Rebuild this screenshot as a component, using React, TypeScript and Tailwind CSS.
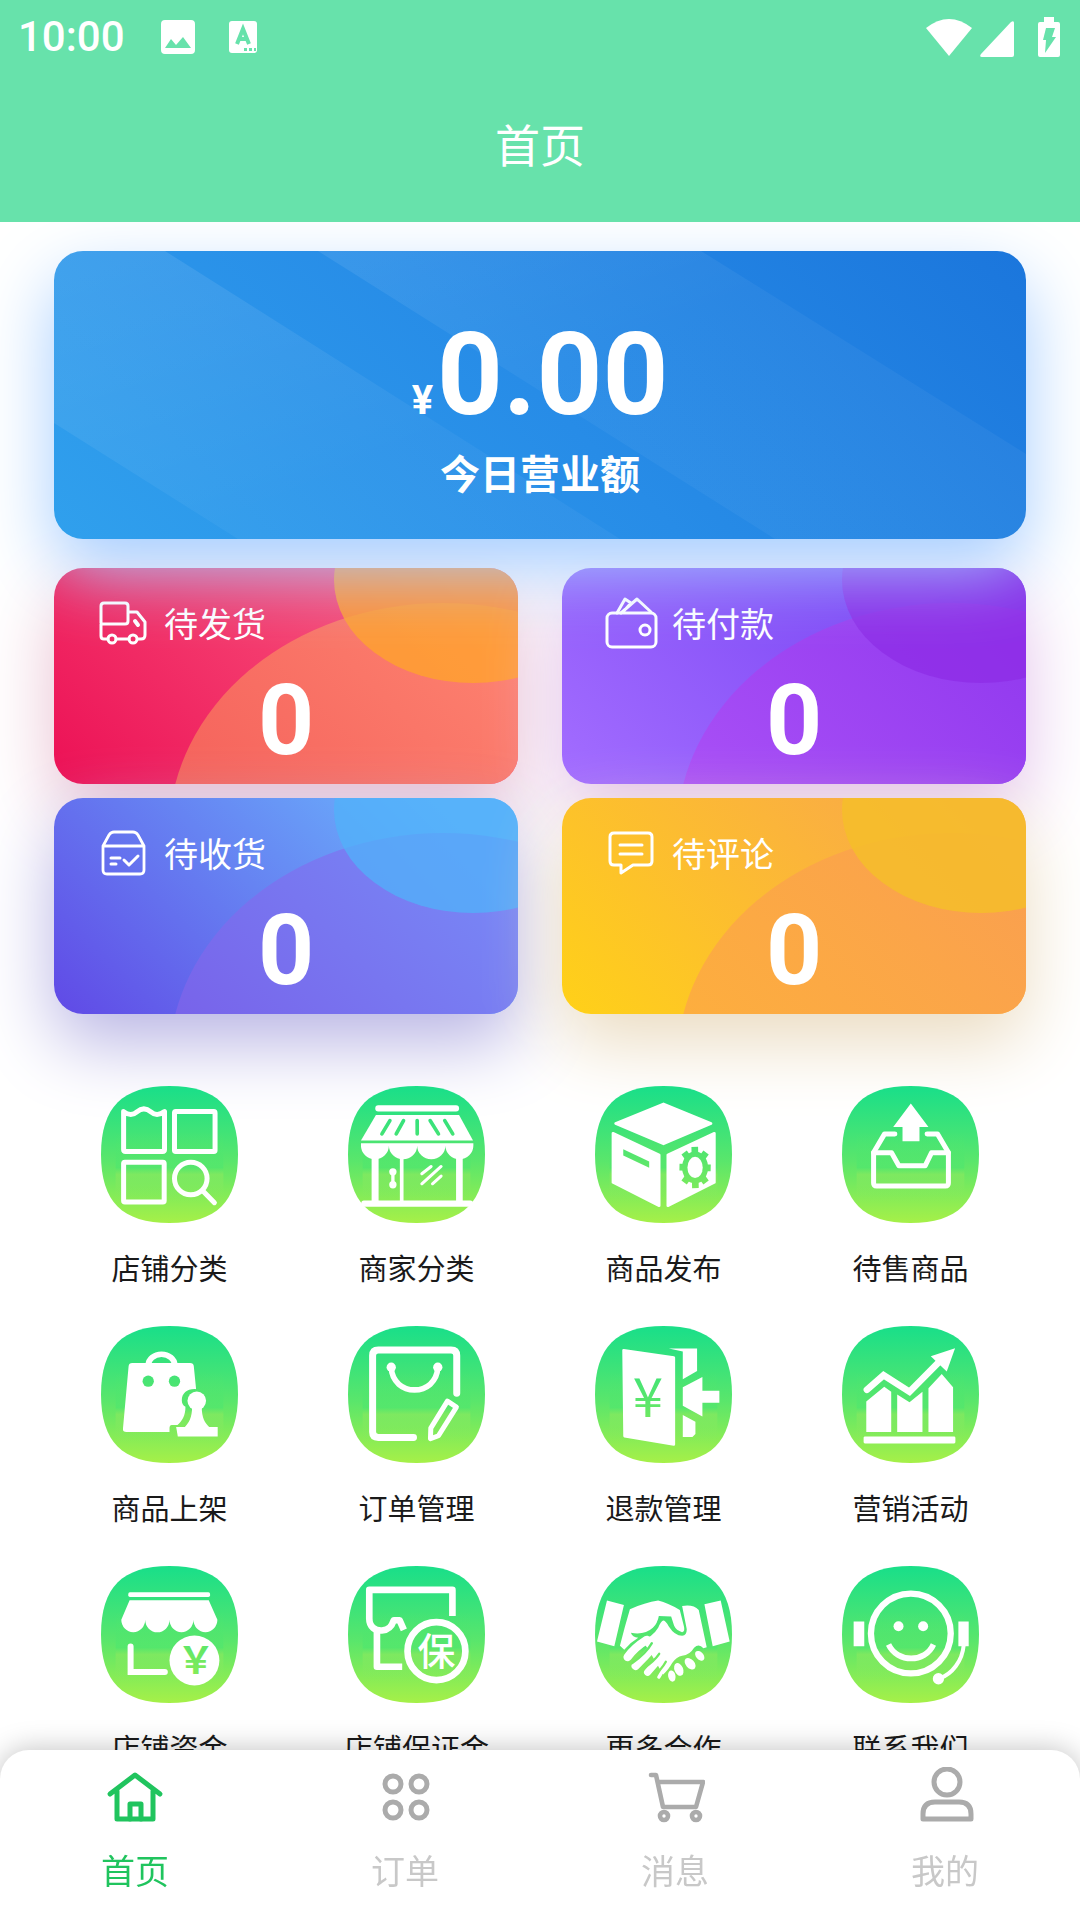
import { useState } from 'react';
import type { ReactNode } from 'react';

type OrderCard = {
  label: string;
  count: number;
  shadow: string;
  base: [string, string];
  big: [string, string];
  small: string;
  icon: ReactNode;
};

type Service = {
  label: string;
  icon: ReactNode;
};

const TILE = 'url(#tileGradient)';

const orderCards: OrderCard[] = [
  {
    label: '待发货',
    count: 0,
    shadow: 'shadow-[0_29px_72px_rgb(232,190,208)]',
    base: ['#EC1055', '#FA5A80'],
    big: ['#F5625B', '#FD8270'],
    small: 'rgba(255,163,45,0.8)',
    icon: (
      <g strokeWidth="3">
        <path d="M4 27V10q0-3 3-3H28q3 0 3 3V25q0 3-3 3H4V40q0 3 3 3h4M19 43h13M41 43h3q4 0 4-4V26L40 16H31" />
        <circle cx="15" cy="43" r="4" />
        <circle cx="36" cy="43" r="4" />
        <path d="M38 25l3 4" strokeWidth="4" />
      </g>
    ),
  },
  {
    label: '待付款',
    count: 0,
    shadow: 'shadow-[0_29px_72px_rgb(226,192,234)]',
    base: ['#A36DFF', '#7843F4'],
    big: ['#A950F6', '#923AEF'],
    small: 'rgba(142,44,230,0.75)',
    icon: (
      <g strokeWidth="3">
        <rect x="2" y="17" width="49" height="34" rx="5" />
        <circle cx="40" cy="34" r="5" />
        <path d="M12 17L20 3l6 4M16 17L32 3 46 16M18 16l8-9" />
      </g>
    ),
  },
  {
    label: '待收货',
    count: 0,
    shadow: 'shadow-[0_29px_72px_rgb(184,180,228)]',
    base: ['#6049E6', '#6BB4FC'],
    big: ['#7863EA', '#7889F6'],
    small: 'rgba(80,178,250,0.75)',
    icon: (
      <g strokeWidth="2.8">
        <path d="M6 20L12 9q2-3 5-3H36q3 0 5 3l6 11V44q0 4-4 4H10q-4 0-4-4zM6 20H47" />
        <path d="M14 32h9M14 38h5M27 34l5 5 9-9" strokeWidth="3" />
      </g>
    ),
  },
  {
    label: '待评论',
    count: 0,
    shadow: 'shadow-[0_29px_72px_rgb(235,220,193)]',
    base: ['#FFD118', '#F9A74B'],
    big: ['#FDAE3E', '#FAA04F'],
    small: 'rgba(245,191,40,0.8)',
    icon: (
      <g strokeWidth="3">
        <path d="M9 7H43q4 0 4 4V35q0 4-4 4H28L16 47V39H9q-4 0-4-4V11q0-4 4-4z" />
        <path d="M15 19H37M15 28H37" />
      </g>
    ),
  },
];

const services: Service[] = [
  {
    label: '店铺分类',
    icon: (
      <g fill="none" stroke="#fff" strokeWidth="15" strokeLinejoin="round" strokeLinecap="round">
        <path d="M68 77Q90 94 108 78Q129 60 150 78Q168 94 191 77V191q0 6-6 6H74q-6 0-6-6z" />
        <rect x="221" y="77" width="122" height="120" rx="4" />
        <rect x="68" y="229" width="122" height="120" rx="4" />
        <circle cx="270" cy="278" r="49" />
        <path d="M308 317l33 34" />
      </g>
    ),
  },
  {
    label: '商家分类',
    icon: (
      <g fill="#fff">
        <rect x="82" y="58" width="252" height="19" rx="9" />
        <path d="M84 87H334L376 164H39z" />
        <path d="M39 172H377V180a42 40 0 0 1-84 0a42 40 0 0 1-85 0a42 40 0 0 1-85 0a42 40 0 0 1-84 0z" />
        <path d="M71 210h21V350H71zM156 210h11V350h-11zM325 210h20V350h-20z" />
        <rect x="40" y="344" width="336" height="19" rx="8" />
        <circle cx="135" cy="258" r="11" />
        <circle cx="135" cy="297" r="11" />
        <path d="M130 255h10v45h-10z" />
        <g fill="none" stroke="#fff" strokeWidth="9" strokeLinecap="round">
          <path d="M222 264l28-22M222 294l58-52M254 294l26-23" />
        </g>
        <g fill="none" stroke={TILE} strokeWidth="11" strokeLinecap="round">
          <path d="M126 104l-24 40M167 104l-22 40M208 104l.2 40M247 104l25 40M291 104l24 40" />
        </g>
      </g>
    ),
  },
  {
    label: '商品发布',
    icon: (
      <g fill="#fff" stroke="#fff" strokeWidth="8" strokeLinejoin="round">
        <path d="M206 54L349 113 206 174 62 113z" />
        <path d="M54 142L193 207V360L54 290z" />
        <path d="M359 142L219 207V360L359 290z" />
        <path d="M85 190l78 37v19l-78-37z" fill={TILE} stroke="none" />
        <g fill="none" stroke={TILE} strokeLinejoin="miter">
          <ellipse cx="301" cy="245" rx="31" ry="40" strokeWidth="16" />
          <path d="M300 183l2 124M254 244l94 2M268 200l66 90M334 200l-66 90" strokeWidth="20" />
        </g>
        <ellipse cx="301" cy="245" rx="23" ry="32" stroke="none" />
      </g>
    ),
  },
  {
    label: '待售商品',
    icon: (
      <>
        <path d="M207 53l53 70h-27v43h-51v-43h-28z" fill="#fff" />
        <g fill="none" stroke="#fff" strokeWidth="15" strokeLinejoin="round" strokeLinecap="round">
          <path d="M159 144H128L95 200V292q0 9 9 9H311q9 0 9-9V200L287 144H256" />
          <path d="M95 201h54l22 39h79l19-39h51" />
        </g>
      </>
    ),
  },
  {
    label: '商品上架',
    icon: (
      <g fill="#fff">
        <path d="M94 111H268q10 0 11 9l7 70C260 188 243 202 243 223C243 233 247 238 254 243C254 270 244 286 230 298H212q-6 0-6 8V319H77q-12 0-11-10L83 121q1-10 11-10z" />
        <path d="M142 118a40 33 0 0 1 80 0" fill="none" stroke="#fff" strokeWidth="17" />
        <circle cx="142" cy="166" r="17" fill={TILE} />
        <circle cx="221" cy="166" r="17" fill={TILE} />
        <circle cx="288" cy="225" r="28" />
        <path d="M274 242C274 276 264 292 250 306H328C312 292 303 276 303 242z" />
        <path d="M226 304H351V332H231z" />
      </g>
    ),
  },
  {
    label: '订单管理',
    icon: (
      <g fill="none" stroke="#fff" strokeLinejoin="round" strokeLinecap="round">
        <path d="M327 202V89q0-17-17-17H91q-17 0-17 17V319q0 16 17 16H197" strokeWidth="21" />
        <path d="M130 124C134 215 266 215 270 124" strokeWidth="17" />
        <path d="M299 226l27 18-54 86-24 9 1-32z" strokeWidth="15" />
        <circle cx="130" cy="124" r="14" fill="#fff" stroke="none" />
        <circle cx="270" cy="124" r="14" fill="#fff" stroke="none" />
      </g>
    ),
  },
  {
    label: '退款管理',
    icon: (
      <g fill="#fff">
        <path d="M86 73L237 95V356L89 331z" stroke="#fff" strokeWidth="8" strokeLinejoin="round" />
        <path d="M222 68h85v67l-43 25V77zM264 184l59-31v42h51v36h-51v41l-59-32zM264 268l38 20v37l-9 9h-29z" />
        <text x="159" y="275" textAnchor="middle" fontSize="164" fill={TILE} className="font-['Noto_Sans_CJK_SC',sans-serif] font-normal">
          ¥
        </text>
      </g>
    ),
  },
  {
    label: '营销活动',
    icon: (
      <g fill="#fff">
        <rect x="65" y="332" width="276" height="21" rx="4" />
        <path d="M73 227l54-44 21 15V319H73zM166 206l37 23 39-31V319h-76zM260 187l40-43 34 40V319h-74z" />
        <path d="M75 192l50-44 78 50 92-93" fill="none" stroke="#fff" strokeWidth="20" strokeLinecap="round" />
        <path d="M340 67l-25 70-48-46z" />
      </g>
    ),
  },
  {
    label: '店铺资金',
    icon: (
      <g fill="#fff">
        <rect x="82" y="79" width="246" height="14" rx="5" />
        <path d="M86 103H324L350 162a36 37 0 0 1-72 0a36 37 0 0 1-72 0a36 37 0 0 1-73 0a36 37 0 0 1-72 0z" />
        <path d="M89 242v77H192" fill="none" stroke="#fff" strokeWidth="18" strokeLinecap="round" />
        <circle cx="281" cy="284" r="75" />
        <text x="285" y="324" textAnchor="middle" fontSize="112" fill={TILE} className="font-['Noto_Sans_CJK_SC',sans-serif] font-bold">
          ￥
        </text>
      </g>
    ),
  },
  {
    label: '店铺保证金',
    icon: (
      <g fill="none" stroke="#fff" strokeWidth="20" strokeLinejoin="round">
        <path d="M314 150V72H64V158C64 184 82 195 102 194C124 193 132 180 138 163H155L168 192" />
        <path d="M87 190V303H163" />
        <circle cx="266" cy="256" r="87" />
        <text x="266" y="297" textAnchor="middle" fontSize="114" fill="#fff" stroke="none" className="font-['Noto_Sans_CJK_SC',sans-serif] font-medium">
          保
        </text>
      </g>
    ),
  },
  {
    label: '更多合作',
    icon: (
      <g fill="#fff">
        <path d="M36 104l51 13-29 124-52-14zM329 115l49-11 27 123-51 14z" />
        <path d="M105 130Q150 110 190 104Q220 112 255 132L267 180Q272 198 262 199Q244 194 238 180L229 152 192 150Q188 172 174 186Q150 208 108 201Q112 214 130 216Q106 230 88 252L75 240Q90 180 105 130z" />
        <path d="M205 164Q212 164 222 182Q240 210 262 210Q276 208 276 190L262 120Q295 114 312 132L336 244 326 247Q312 232 298 246Q285 268 262 270Q246 272 232 292Q220 314 205 326L160 250 140 222Q172 216 190 186Q198 166 205 164z" />
        <g fill="none" stroke="#fff" strokeLinecap="round">
          <path d="M156 222Q118 246 98 274" strokeWidth="25" />
          <path d="M178 242Q150 274 122 301" strokeWidth="24" />
          <path d="M200 272L158 320" strokeWidth="21" />
          <path d="M215 296L192 334" strokeWidth="10" />
        </g>
        <g fill="none" stroke={TILE} strokeWidth="7" strokeLinecap="round">
          <path d="M171 232Q154 262 112 292M193 264Q180 284 146 308M213 288Q200 312 176 330" />
        </g>
        <ellipse cx="231" cy="331" rx="11" ry="17" transform="rotate(-12 231 331)" />
        <ellipse cx="252" cy="311" rx="13" ry="20" transform="rotate(-22 252 311)" />
        <ellipse cx="286" cy="294" rx="13" ry="20" transform="rotate(-42 286 294)" />
        <ellipse cx="315" cy="270" rx="11" ry="17" transform="rotate(-42 315 270)" />
      </g>
    ),
  },
  {
    label: '联系我们',
    icon: (
      <g fill="#fff">
        <g fill="none" stroke="#fff">
          <circle cx="207" cy="203" r="120" strokeWidth="19" />
          <path d="M140 236C166 292 250 292 275 236" strokeWidth="17" />
          <path d="M366 238C362 285 332 325 292 339" strokeWidth="12" />
        </g>
        <circle cx="170" cy="181" r="15" />
        <circle cx="244" cy="181" r="15" />
        <path d="M35 167h32v74H35zM350 167h31v74h-31z" />
        <circle cx="290" cy="339" r="17" />
      </g>
    ),
  },
];

const tabs: Service[] = [
  {
    label: '首页',
    icon: (
      <>
        <path d="M5 27L30 8 55 27M12 24V52H48V24" />
        <path d="M25 52V37H36V52" />
      </>
    ),
  },
  {
    label: '订单',
    icon: (
      <>
        <circle cx="18" cy="17" r="8" />
        <circle cx="44" cy="17" r="8" />
        <circle cx="18" cy="43" r="8" />
        <circle cx="44" cy="43" r="8" />
      </>
    ),
  },
  {
    label: '消息',
    icon: (
      <g strokeWidth="4.6">
        <path d="M6 8h5l7 32H51L58 15H14" />
        <circle cx="19" cy="49" r="4" />
        <circle cx="51" cy="49" r="4" />
      </g>
    ),
  },
  {
    label: '我的',
    icon: (
      <>
        <circle cx="32" cy="15" r="13" />
        <path d="M8 52V47q0-12 12-12H44q12 0 12 12v5z" />
      </>
    ),
  },
];

function StatusBar() {
  return (
    <div className="flex h-[74px] items-center justify-between pr-5 pl-[18px]">
      <div className="flex items-center">
        <span className="text-[42px] leading-[50px] font-medium">10:00</span>
        <svg viewBox="0 0 34 34" className="ml-9 size-[34px]">
          <path fillRule="evenodd" fill="#fff" d="M4 0H30q4 0 4 4V30q0 4-4 4H4q-4 0-4-4V4q0-4 4-4zM4 28H30L22 17l-7 8-5-6z" />
        </svg>
        <svg viewBox="0 0 28 32" className="ml-[34px] h-8 w-7">
          <rect width="28" height="32" rx="3" fill="#fff" />
          <path d="M8 23L14 8l6 15M10 18h8" fill="none" stroke="#67E2AB" strokeWidth="4" />
          <path d="M15 27h3v3h-3zM20 27h3v3h-3zM25 27h2v3h-2z" fill="#67E2AB" />
        </svg>
      </div>
      <div className="flex items-end">
        <svg viewBox="0 0 46 38" className="h-[38px] w-[46px]">
          <path d="M0 9Q23-9 46 9L23 37z" fill="#fff" />
        </svg>
        <svg viewBox="0 0 34 36" className="ml-2 h-9 w-[34px]">
          <path d="M34 2V34q0 2-2 2H2q-3 0-1-3L31 1q3-2 3 1z" fill="#fff" />
        </svg>
        <svg viewBox="0 0 22 40" className="ml-6 h-10 w-[22px]">
          <path d="M6 0H16V5H20q2 0 2 2V38q0 2-2 2H2q-2 0-2-2V7q0-2 2-2H6z" fill="#fff" />
          <path d="M8 11h9l-3 9h4L7 36l1-13H5z" fill="#67E2AB" />
        </svg>
      </div>
    </div>
  );
}

function CardBackdrop({ id, card }: { id: string; card: OrderCard }) {
  return (
    <svg viewBox="0 0 464 216" preserveAspectRatio="none" className="absolute inset-0 size-full" aria-hidden="true">
      <defs>
        <linearGradient id={`${id}-base`} gradientUnits="userSpaceOnUse" x1="0" y1="216" x2="300" y2="-84">
          <stop offset="0" stopColor={card.base[0]} />
          <stop offset="1" stopColor={card.base[1]} />
        </linearGradient>
        <linearGradient id={`${id}-big`} gradientUnits="userSpaceOnUse" x1="160" y1="256" x2="400" y2="16">
          <stop offset="0" stopColor={card.big[0]} />
          <stop offset="1" stopColor={card.big[1]} />
        </linearGradient>
      </defs>
      <rect width="464" height="216" fill={`url(#${id}-base)`} />
      <ellipse cx="389" cy="265" rx="274" ry="230" fill={`url(#${id}-big)`} />
      <ellipse cx="419" cy="12" rx="139" ry="103" fill={card.small} />
    </svg>
  );
}

function ServiceIcon({ children }: { children: ReactNode }) {
  return (
    <svg viewBox="0 0 412 412" className="size-[137px]" aria-hidden="true">
      <defs>
        <linearGradient id="tileGradient" gradientUnits="userSpaceOnUse" x1="0" y1="0" x2="0" y2="412">
          <stop offset="0.03" stopColor="#1CDF88" />
          <stop offset="0.55" stopColor="#5AE66B" />
          <stop offset="1" stopColor="#A6F048" />
        </linearGradient>
        <linearGradient id="tileGlow" x1="0" y1="0" x2="0" y2="1">
          <stop offset="0" stopColor="#4FE66E" stopOpacity="0" />
          <stop offset="0.5" stopColor="#4FE66E" stopOpacity="0.7" />
          <stop offset="0.6" stopColor="#86E95F" stopOpacity="0.7" />
          <stop offset="1" stopColor="#86E95F" stopOpacity="0" />
        </linearGradient>
      </defs>
      <path d="M0 206C0 64 64 0 206 0S412 64 412 206 348 412 206 412 0 348 0 206z" fill={TILE} />
      <rect x="44" y="140" width="324" height="210" fill="url(#tileGlow)" />
      {children}
    </svg>
  );
}

export default function App() {
  const [activeTab, setActiveTab] = useState('首页');

  return (
    <div className="min-h-screen overflow-hidden bg-white pb-36 font-[Roboto,'Noto_Sans_CJK_SC',sans-serif] text-[#1a1a1a]">
      <header className="relative z-20 bg-[#67E2AB] text-white">
        <StatusBar />
        <h1 className="flex h-[148px] items-center justify-center pb-px text-[45px] leading-[60px] font-normal">首页</h1>
      </header>

      <main>
        <section className="relative z-10 mx-[54px] mt-[29px] overflow-hidden rounded-[29px] bg-[linear-gradient(45deg,#30A0ED_0%,#278CE7_50%,#1B76DC_100%)] pt-[66px] pb-[33px] text-center text-white shadow-[0_29px_72px_rgb(165,205,255)]">
          <svg viewBox="0 0 972 288" preserveAspectRatio="none" className="absolute inset-0 size-full" aria-hidden="true">
            <defs>
              <linearGradient id="bandFade" gradientUnits="userSpaceOnUse" x1="0" y1="0" x2="120" y2="288">
                <stop offset="0" stopColor="#fff" stopOpacity="0.1" />
                <stop offset="0.4" stopColor="#fff" stopOpacity="0.08" />
                <stop offset="1" stopColor="#fff" stopOpacity="0.04" />
              </linearGradient>
            </defs>
            <path d="M0 0H111L566 288H184L0 172zM264 0H647L972 203V288H721z" fill="url(#bandFade)" />
          </svg>
          <div className="relative flex items-baseline justify-center gap-1 font-bold">
            <span className="text-[40px] leading-[60px]">¥</span>
            <span className="text-[115px] leading-[116px]">0.00</span>
          </div>
          <p className="relative mt-[13px] text-[40px] leading-[60px] font-bold">今日营业额</p>
        </section>

        <section className="mx-[54px] mt-[29px] grid grid-cols-2 gap-x-11 gap-y-[14px] text-white">
          {orderCards.map((card, index) => (
            <button key={card.label} type="button" className={`relative rounded-[29px] ${card.shadow}`}>
              <span className="relative block overflow-hidden rounded-[29px] pt-[25px] pb-[14px]">
                <CardBackdrop id={`card${index}`} card={card} />
                <span className="relative flex items-center gap-[15px] pl-[43px]">
                  <svg
                    viewBox="0 1 52 52"
                    className="size-[52px] overflow-visible"
                    fill="none"
                    stroke="#fff"
                    strokeLinecap="round"
                    strokeLinejoin="round"
                    aria-hidden="true"
                  >
                    {card.icon}
                  </svg>
                  <span className="pt-1 text-[34px] leading-[56px]">{card.label}</span>
                </span>
                <span className="relative mt-[19px] block text-center text-[98px] leading-[98px] font-bold">{card.count}</span>
              </span>
            </button>
          ))}
        </section>

        <section className="relative mx-[46px] mt-[72px] grid grid-cols-4 gap-y-[33px]">
          {services.map((service) => (
            <button key={service.label} type="button" className="flex flex-col items-center gap-6">
              <ServiceIcon>{service.icon}</ServiceIcon>
              <span className="text-[29px] leading-[46px]">{service.label}</span>
            </button>
          ))}
        </section>
      </main>

      <nav className="fixed inset-x-0 bottom-0 z-30 grid grid-cols-4 rounded-t-[29px] bg-white pt-[17px] pb-[22px] shadow-[0_0_29px_rgba(0,0,0,0.25)]">
        {tabs.map((tab) => {
          const isActive = tab.label === activeTab;

          return (
            <a
              key={tab.label}
              href={`#${tab.label}`}
              onClick={() => setActiveTab(tab.label)}
              className={`flex flex-col items-center gap-[19px] ${isActive ? 'text-[#20C45E]' : 'text-[#C8C8C8]'}`}
            >
              <svg
                viewBox="0 0 60 60"
                className={`size-[60px] ${isActive ? 'stroke-[#20C45E]' : 'stroke-[#ABABAB]'}`}
                fill="none"
                strokeWidth="5"
                strokeLinecap="round"
                strokeLinejoin="round"
                aria-hidden="true"
              >
                {tab.icon}
              </svg>
              <span className="text-[34px] leading-[52px]">{tab.label}</span>
            </a>
          );
        })}
      </nav>
    </div>
  );
}
